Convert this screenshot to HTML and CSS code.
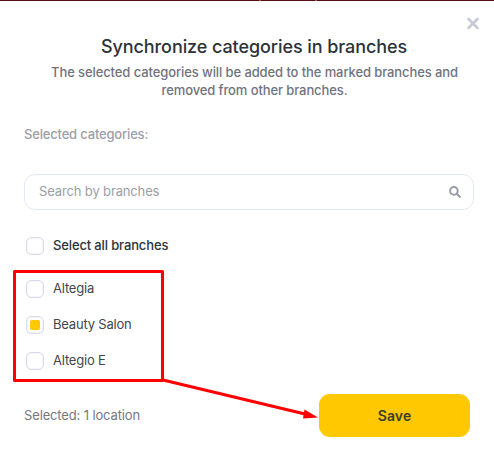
FILE: index.html
```
<!DOCTYPE html>
<html lang="en">
<head>
    <meta charset="UTF-8">
    <title>Synchronize categories in branches</title>
    <link rel="stylesheet" href="styles.css">
</head>
<body>
<div class="topbar"><span class="tick gold"></span><span class="tick"></span></div>
<div class="modal">
    <div class="modal-top">
        <button class="close" aria-label="Close">
            <svg width="14" height="13" viewBox="0 0 14 13"><path d="M2.5 2L11.5 11M11.5 2L2.5 11"/></svg>
        </button>
    </div>
    <h1>Synchronize categories in branches</h1>
    <p class="desc">The selected categories will be added to the marked branches and<br>removed from other branches.</p>
    <div class="caption">Selected categories:</div>
    <div class="search">
        <span class="label">Search by branches</span>
        <svg width="12" height="12" viewBox="0 0 12 12"><circle cx="4.9" cy="4.9" r="3.8"/><path d="M7.8 7.8L10.8 10.8"/></svg>
    </div>
    <div class="row all"><span class="box"></span><span class="label">Select all branches</span></div>
    <ul class="list">
        <li class="row"><span class="box"></span><span class="label">Altegia</span></li>
        <li class="row"><span class="box checked"></span><span class="label">Beauty Salon</span></li>
        <li class="row"><span class="box"></span><span class="label">Altegio E</span></li>
    </ul>
    <div class="footer">
        <span class="count">Selected: 1 location</span>
        <button class="save">Save</button>
    </div>
</div>
<!-- callout: frame round the branches and an arrow to the button -->
<svg class="callout" width="494" height="453" viewBox="0 0 494 453">
    <rect x="14.5" y="271.5" width="148" height="109"/>
    <path class="line" d="M163 380L305 414"/>
    <path class="head" d="M304.5 409.5L318 417.5L303 418.5Z"/>
</svg>
</body>
</html>
```

FILE: styles.css
```
*{
    margin: 0;
    padding: 0;
    box-sizing: border-box;
}
body{
    width: 494px;
    height: 453px;
    overflow: hidden;
    background: #fff;
    font-family: Inter, "Liberation Sans", sans-serif;
    font-size: 13px;
    letter-spacing: -0.14px;
    color: #2c3338;
}
button{
    border: none;
    background: none;
    font: inherit;
}
.topbar{
    display: flex;
    gap: 54px;
    height: 1px;
    padding-left: 259px;
    background: #550d12;
}
.tick{
    width: 2px;
    height: 1px;
    background: #7d6470;
}
.gold{
    background: #96602c;
}
.modal{
    padding: 0 20px 0 24px;
}
.modal-top{
    display: flex;
    justify-content: flex-end;
    height: 34px;
    padding-top: 15px;
}
/* sticks out a little past the right edge of the fields */
.close{
    width: 14px;
    height: 14px;
    margin-right: -6px;
}
.close svg{
    display: block;
    fill: none;
    stroke: #c5cad5;
    stroke-width: 2.6;
    stroke-linecap: round;
}
h1{
    padding-left: 10px;
    line-height: 24px;
    font-size: 18px;
    font-weight: 500;
    letter-spacing: -0.08px;
    text-align: center;
}
.desc{
    margin-top: 4px;
    padding-left: 11px;
    line-height: 18px;
    color: #70737e;
    font-weight: 500;
    letter-spacing: -0.1px;
    text-align: center;
}
.caption{
    margin-top: 26px;
    line-height: 18px;
    color: #9a9ea8;
    font-weight: 500;
    letter-spacing: -0.18px;
}
.search{
    display: flex;
    align-items: center;
    justify-content: space-between;
    height: 36px;
    margin-top: 31px;
    padding: 0 12px 0 14px;
    border: 1px solid #e4e7f6;
    border-radius: 11px;
    color: #9a9ea8;
}
.search svg{
    fill: none;
    stroke: #989ca8;
    stroke-width: 2;
    stroke-linecap: round;
}
.label{
    padding-bottom: 2px;
}
.row{
    display: flex;
    align-items: center;
    gap: 9px;
    height: 36px;
    padding-left: 2px;
}
.all{
    margin-top: 18px;
    font-weight: 500;
}
.list{
    margin-top: 7px;
    list-style: none;
    color: #42474d;
    letter-spacing: -0.2px;
}
.box{
    display: flex;
    align-items: center;
    justify-content: center;
    width: 18px;
    height: 18px;
    border: 1px solid #dadbea;
    border-radius: 5px;
    box-shadow: inset 0 0 0 1px #f5f5fa;
}
.checked::after{
    content: "";
    width: 10px;
    height: 10px;
    border-radius: 2px;
    background: #ffc800;
}
.footer{
    display: flex;
    align-items: center;
    justify-content: space-between;
    margin-top: 15px;
    padding-right: 4px;
    color: #747882;
}
.count{
    padding-bottom: 2px;
}
.save{
    width: 151px;
    height: 43px;
    padding-bottom: 1px;
    border-radius: 11px;
    background: #ffc800;
    color: #3b3d2c;
    font-size: 14px;
    font-weight: 600;
    letter-spacing: 0.1px;
}
.callout{
    position: absolute;
    left: 0;
    top: 0;
    fill: none;
    stroke: #f00;
    stroke-width: 3;
    stroke-linejoin: round;
    pointer-events: none;
}
.callout .head{
    fill: #f00;
    stroke: none;
}
```
